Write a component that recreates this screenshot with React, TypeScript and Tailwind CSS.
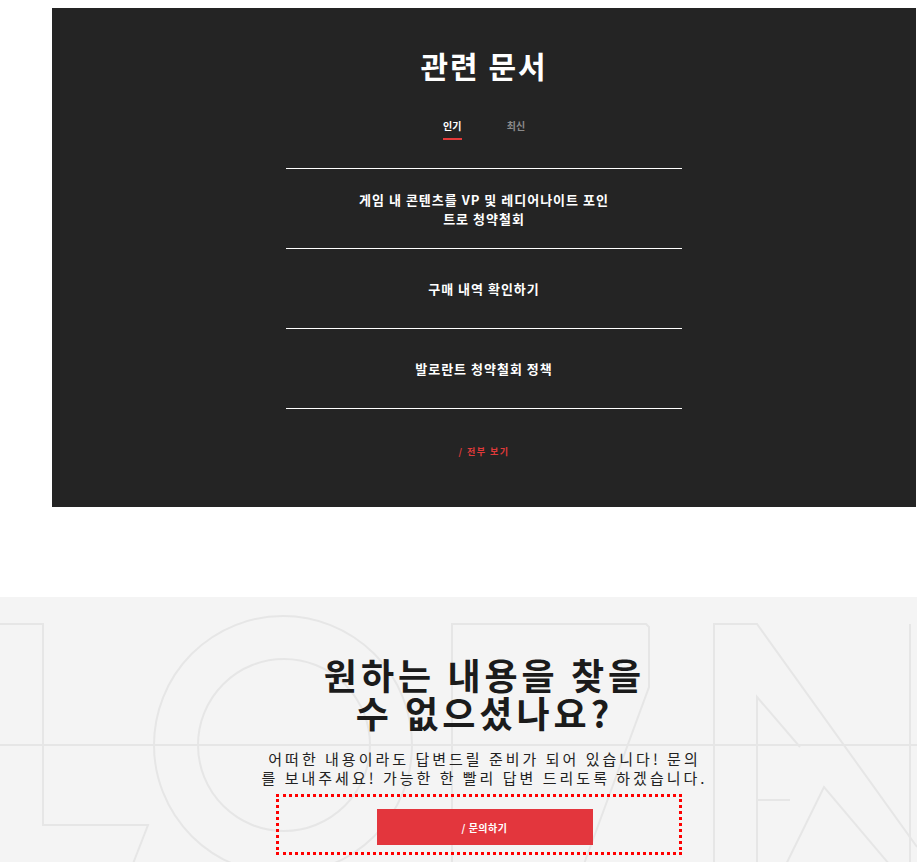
import React from "react";

const font = { fontFamily: '"Noto Sans CJK KR", "Noto Sans", sans-serif' };

function Watermark() {
  return (
    <svg
      className="absolute inset-0 h-full w-full"
      viewBox="0 0 917 300"
      preserveAspectRatio="none"
      fill="none"
      stroke="#e6e6e6"
      strokeWidth="2"
    >
      {/* horizontal guide */}
      <line x1="0" y1="148" x2="917" y2="148" />
      {/* L */}
      <polyline points="0,27 43,27 43,228 148,228 120,300" />
      {/* O */}
      <circle cx="283" cy="148" r="129" />
      <circle cx="284" cy="148" r="86" />
      {/* T-like */}
      <polyline points="452,300 452,27 646,27 649,30 649,90 584,267" />
      {/* N / A */}
      <polyline points="714,300 714,27 757,27 917,250" />
      <polyline points="757,300 757,100 800,150" />
      <polyline points="757,203 790,203" />
      <polyline points="770,300 824,190 917,300" />
      <line x1="910" y1="27" x2="910" y2="300" />
    </svg>
  );
}

export default function App() {
  return (
    <div className="min-h-screen bg-white" style={font}>
      {/* Related documents panel */}
      <div className="pt-[8px]">
        <div className="ml-[52px] flex h-[499px] w-[864px] flex-col items-center bg-[#242424] pt-[39px]">
          <h2 className="text-[30px] font-bold leading-[36px] tracking-[2px] text-white">관련 문서</h2>

          <div className="mt-[36px] flex gap-[45px]">
            <div className="flex flex-col items-center">
              <span className="text-[10px] font-bold leading-[14px] text-white">인기</span>
              <span className="mt-[5px] h-[2px] w-[19px] bg-[#e53a3a]" />
            </div>
            <div className="flex flex-col items-center">
              <span className="text-[10px] font-bold leading-[14px] text-[#8a8a8a]">최신</span>
            </div>
          </div>

          <div className="mt-[28px] w-[396px]">
            <div className="flex h-[80px] items-center justify-center border-t border-white text-center text-[13px] font-bold leading-[19px] tracking-[1px] text-white">
              <span>
                게임 내 콘텐츠를 VP 및 레디어나이트 포인
                <br />
                트로 청약철회
              </span>
            </div>
            <div className="flex h-[80px] items-center justify-center border-t border-white text-center text-[13px] font-bold leading-[19px] tracking-[1px] text-white">
              구매 내역 확인하기
            </div>
            <div className="flex h-[80px] items-center justify-center border-t border-white text-center text-[13px] font-bold leading-[19px] tracking-[1px] text-white">
              발로란트 청약철회 정책
            </div>
            <div className="h-px bg-white" />
          </div>

          <a className="mt-[37px] text-[9px] font-bold leading-[12px] tracking-[1.5px] text-[#e03a3a]">/ 전부 보기</a>
        </div>
      </div>

      {/* Contact section */}
      <div className="relative mt-[90px] h-[300px] overflow-hidden bg-[#f4f4f4]">
        <Watermark />
        <div className="relative flex flex-col items-center pl-[52px] pt-[58px]">
          <h2 className="text-center text-[36px] font-bold leading-[38px] tracking-[4px] text-[#1b1b1b]">
            원하는 내용을 찾을
            <br />
            수 없으셨나요?
          </h2>
          <p className="mt-[18px] text-center text-[15px] leading-[19px] tracking-[3px] text-[#222]">
            어떠한 내용이라도 답변드릴 준비가 되어 있습니다! 문의
            <br />
            를 보내주세요! 가능한 한 빨리 답변 드리도록 하겠습니다.
          </p>
          <div className="mr-[12px] mt-[7px] flex h-[61px] w-[406px] border-[3px] border-dotted border-[#ff0000] pl-[98px] pt-[12px]">
            <button className="flex h-[36px] w-[216px] items-center justify-center bg-[#e3363d] text-[10px] font-bold tracking-[0.5px] text-white">
              / 문의하기
            </button>
          </div>
        </div>
      </div>
    </div>
  );
}
